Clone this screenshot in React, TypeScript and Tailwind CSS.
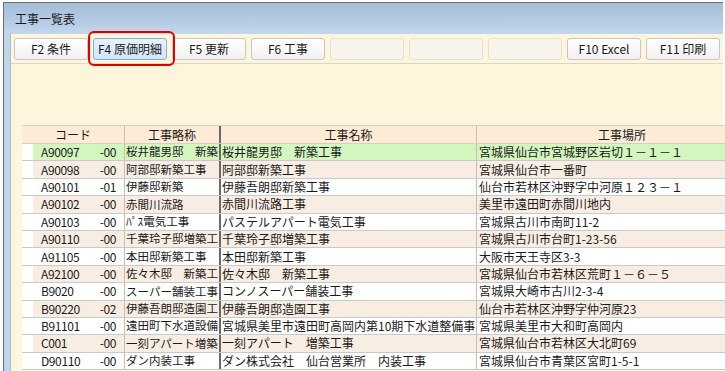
import React from "react";

const rows: [string, string, string, string, string][] = [
  ["A90097", "-00", "桜井龍男邸　新築", "桜井龍男邸　新築工事", "宮城県仙台市宮城野区岩切１－１－１"],
  ["A90098", "-00", "阿部邸新築工事", "阿部邸新築工事", "宮城県仙台市一番町"],
  ["A90101", "-01", "伊藤邸新築", "伊藤吾朗邸新築工事", "仙台市若林区沖野字中河原１２３－１"],
  ["A90102", "-00", "赤間川流路", "赤間川流路工事", "美里市遠田町赤間川地内"],
  ["A90103", "-00", "ﾊﾟｽ電気工事", "パステルアパート電気工事", "宮城県古川市南町11-2"],
  ["A90110", "-00", "千葉玲子邸増築工", "千葉玲子邸増築工事", "宮城県古川市台町1-23-56"],
  ["A91105", "-00", "本田邸新築工事", "本田邸新築工事", "大阪市天王寺区3-3"],
  ["A92100", "-00", "佐々木邸　新築工", "佐々木邸　新築工事", "宮城県仙台市若林区荒町１－６－５"],
  ["B9020", "-00", "スーパー舗装工事", "コンノスーパー舗装工事", "宮城県大崎市古川2-3-4"],
  ["B90220", "-02", "伊藤吾朗邸造園工", "伊藤吾朗邸造園工事", "仙台市若林区沖野字仲河原23"],
  ["B91101", "-00", "遠田町下水道設備", "宮城県美里市遠田町高岡内第10期下水道整備事業", "宮城県美里市大和町高岡内"],
  ["C001", "-00", "一刻アパート増築", "一刻アパート　増築工事", "宮城県仙台市若林区大北町69"],
  ["D90110", "-00", "ダン内装工事", "ダン株式会社　仙台営業所　内装工事", "宮城県仙台市青葉区宮町1-5-1"],
];

const buttons: [string, boolean][] = [
  ["F2 条件", true],
  ["F4 原価明細", true],
  ["F5 更新", true],
  ["F6 工事", true],
  ["", false],
  ["", false],
  ["", false],
  ["F10 Excel", true],
  ["F11 印刷", true],
];

export default function App() {
  return (
    <div
      className="relative w-[725px] h-[371px] overflow-hidden bg-white text-[12px] text-[#1a1a1a]"
      style={{ fontFamily: '"Noto Sans CJK JP", "Noto Sans", sans-serif' }}
    >
      <div className="mt-[2px] ml-[3px] w-[720px] h-[369px] border-l border-t border-[#6e6e6e] flex flex-col">
        <div className="h-[31px] shrink-0 bg-gradient-to-b from-[#a5bdd9] to-[#c2d6ec] flex items-center pl-[11px] leading-none">
          工事一覧表
        </div>
        <div className="flex flex-1 min-h-0">
          <div className="w-[7px] shrink-0 bg-[#c0d4ea] border-r border-[#a9bdd3]" />
          <div className="flex-1 min-w-0 bg-[#fdf6dd] flex flex-col">
            <div className="h-[30px] shrink-0 border-b border-[#dcd6c4] flex items-center gap-[5px] pl-[3px]">
              {buttons.map(([label, enabled], i) => (
                <div
                  key={i}
                  className={
                    "w-[74px] h-[22px] shrink-0 rounded-[3px] border flex items-center justify-center leading-none " +
                    (i === 1
                      ? "border-[#7fb0e0] bg-gradient-to-b from-[#e8f2fc] to-[#d3e5f7]"
                      : enabled
                      ? "border-[#c6c6c6] bg-gradient-to-b from-white to-[#f1f1f1]"
                      : "border-[#e6e1d2] bg-[#f7f4ec]")
                  }
                >
                  {label}
                </div>
              ))}
            </div>
            <div className="h-[61px] shrink-0" />
            <div className="pl-[11px]">
              <div className="w-[800px]">
                <div className="h-[19px] flex bg-[#fdebd6] border-t border-[#d6cfc4] border-b border-[#c8c0b4] leading-none">
                  <div className="w-[103px] shrink-0 flex items-center justify-center border-r border-[#c4beb4]">コード</div>
                  <div className="w-[96px] shrink-0 flex items-center justify-center border-r-2 border-[#6a6a6a]">工事略称</div>
                  <div className="w-[256px] shrink-0 flex items-center justify-center border-r border-[#c4beb4]">工事名称</div>
                  <div className="w-[290px] shrink-0 flex items-center justify-center">工事場所</div>
                </div>
                {rows.map((r, i) => {
                  const bg = i === 0 ? "bg-[#d3f6bf]" : i % 2 === 1 ? "bg-[#f8ede3]" : "bg-white";
                  return (
                    <div key={i} className={"h-[17.4px] flex border-b border-[#c9c9c9] leading-none " + bg}>
                      <div className="w-[103px] shrink-0 flex items-center bg-white border-r border-[#c4beb4]">
                        <div className="w-[11px] h-full shrink-0 bg-white" />
                        <div className={"flex-1 h-full flex items-center justify-between pl-[8px] pr-[8px] tracking-[-0.4px] " + bg}>
                          <span>{r[0]}</span>
                          <span>{r[1]}</span>
                        </div>
                      </div>
                      <div className="w-[96px] shrink-0 flex items-center border-r-2 border-[#6a6a6a] pl-[1px] text-[11.5px] overflow-hidden whitespace-nowrap">
                        {r[2]}
                      </div>
                      <div className="w-[256px] shrink-0 flex items-center border-r border-[#c4beb4] pl-[1px] overflow-hidden whitespace-nowrap">
                        {r[3]}
                      </div>
                      <div className="w-[290px] shrink-0 flex items-center pl-[2px] overflow-hidden whitespace-nowrap">
                        {r[4]}
                      </div>
                    </div>
                  );
                })}
              </div>
            </div>
          </div>
        </div>
      </div>
      <div className="absolute left-[88px] top-[31px] w-[87px] h-[35px] border-2 border-[#e00000] rounded-[6px] pointer-events-none" />
    </div>
  );
}
